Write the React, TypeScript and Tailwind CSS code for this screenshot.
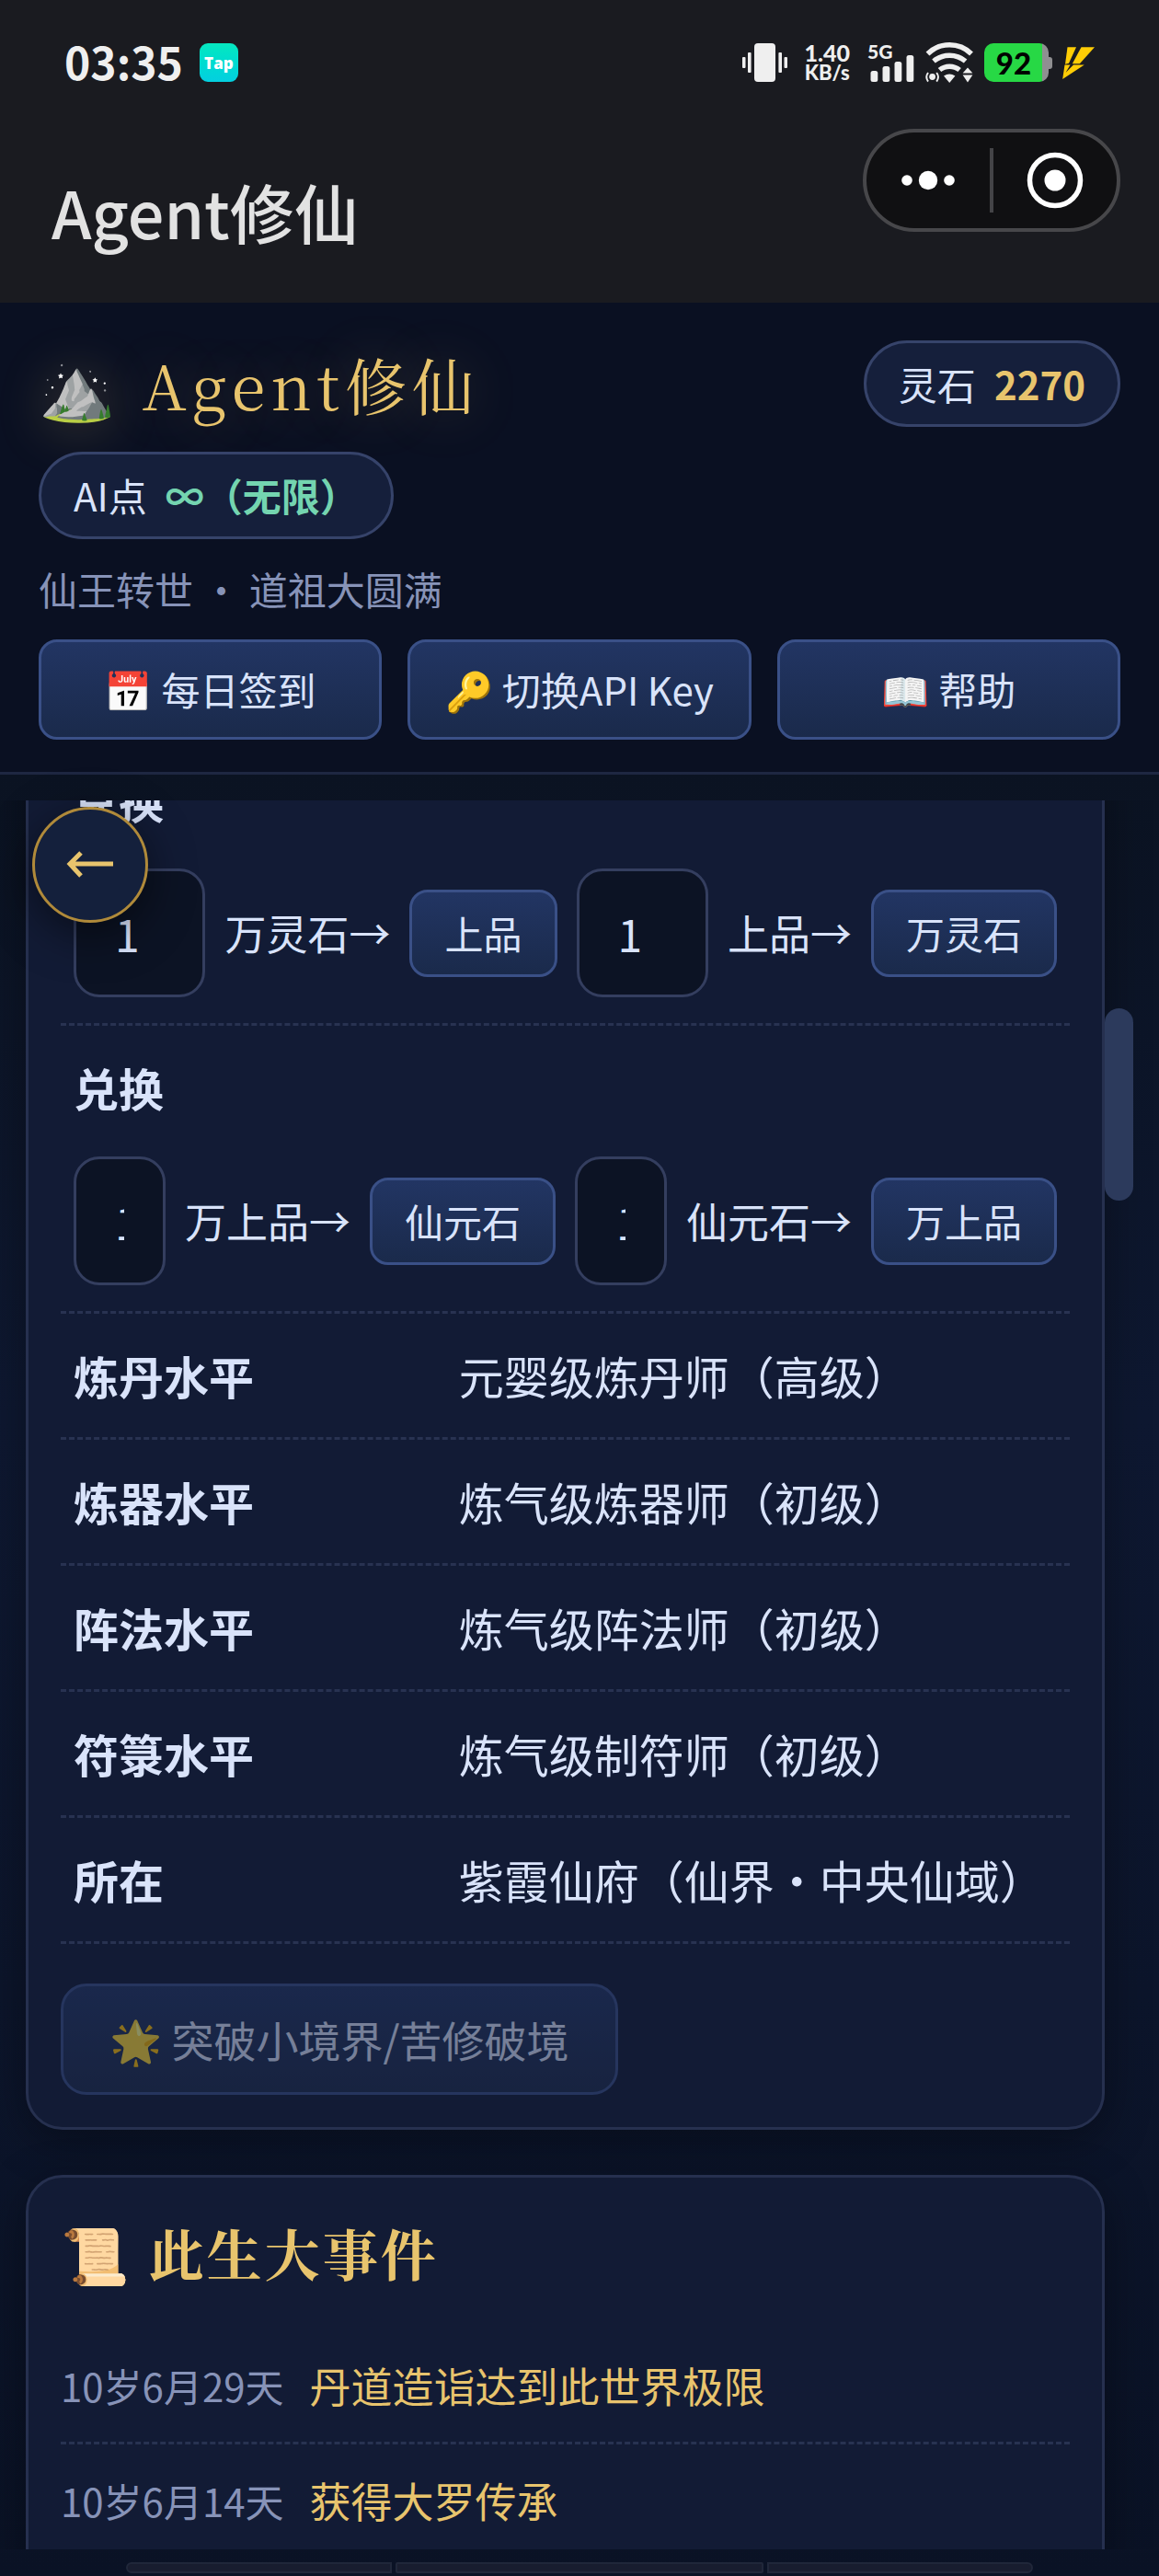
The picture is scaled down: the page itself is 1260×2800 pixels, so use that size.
import { useLayoutEffect, useRef, useState } from 'react';

const sans = "font-['Noto_Sans_CJK_SC','Noto_Color_Emoji',sans-serif]";
const serif = "font-['Noto_Serif_CJK_SC','Noto_Color_Emoji',serif]";

const gameButton =
  'shrink-0 rounded-[20px] border-[3px] border-[#3a5087] bg-linear-to-b from-[#223563] to-[#1a2a4b] pb-0.5 text-[42px] text-[#d9e3fa]';

const actions = ['📅 每日签到', '🔑 切换API Key', '📖 帮助'];

const exchanges = [
  [
    { id: 'ls-sp', from: '万灵石→', to: '上品' },
    { id: 'sp-ls', from: '上品→', to: '万灵石' },
  ],
  [
    { id: 'sp-xy', from: '万上品→', to: '仙元石' },
    { id: 'xy-sp', from: '仙元石→', to: '万上品' },
  ],
];

const stats = [
  { label: '炼丹水平', value: '元婴级炼丹师（高级）' },
  { label: '炼器水平', value: '炼气级炼器师（初级）' },
  { label: '阵法水平', value: '炼气级阵法师（初级）' },
  { label: '符箓水平', value: '炼气级制符师（初级）' },
  { label: '所在', value: '紫霞仙府（仙界・中央仙域）' },
];

const events = [
  { date: '10岁6月29天', title: '丹道造诣达到此世界极限' },
  { date: '10岁6月14天', title: '获得大罗传承' },
];

function StatusBar() {
  return (
    <div className="flex h-[42px] items-center justify-between px-[70px] text-[#efefef]">
      <div className="flex items-center gap-[18px]">
        <span className="pb-1 text-[48px] leading-[38px] font-bold">03:35</span>
        <div className="flex size-[42px] items-center justify-center rounded-[9px] bg-linear-to-b from-[#06e8bf] to-[#04cfe0] font-['Open_Sans'] text-[17px] leading-none font-extrabold text-white">
          Tap
        </div>
      </div>

      <div className="flex items-center gap-[11px]">
        {/* Vibrate */}
        <svg width="49" height="42" viewBox="0 0 49 42" fill="currentColor">
          <rect x="13" width="23" height="42" rx="4" />
          <rect x="0" y="15" width="3.5" height="12" rx="1" />
          <rect x="6" y="10" width="3.6" height="22" rx="1" />
          <rect x="39.4" y="10" width="3.6" height="22" rx="1" />
          <rect x="45.5" y="15" width="3.5" height="12" rx="1" />
        </svg>

        <div className="mx-2 flex flex-col items-center font-['Lato'] font-black">
          <span className="text-[25px] leading-[22px]">1.40</span>
          <span className="text-[22px] leading-[22px]">KB/s</span>
        </div>

        {/* Signal */}
        <div className="relative">
          <svg width="51" height="42" viewBox="0 0 51 42" fill="currentColor">
            <rect x="3.5" y="30" width="7.8" height="12" rx="2.5" />
            <rect x="16.5" y="25" width="7.8" height="17" rx="2.5" />
            <rect x="29.5" y="20" width="7.8" height="22" rx="2.5" />
            <rect x="42.5" y="13" width="7.8" height="29" rx="2.5" />
          </svg>
          <span className="absolute top-0 left-0 font-['Lato'] text-[21px] leading-[18px] font-black">5G</span>
        </div>

        {/* Wi-Fi */}
        <svg width="54" height="44" viewBox="0 0 54 44" fill="none" stroke="currentColor" strokeWidth="5.5">
          <path d="M3.5 12.5A34 34 0 0 1 51 12.5" />
          <path d="M10 20.5A27 27 0 0 1 44.6 20.5" />
          <path d="M16.5 30A17 17 0 0 1 38.1 30" />
          <path d="M21 36.5Q27.2 32.5 33.4 36.5L27.2 44Z" fill="currentColor" stroke="none" />
          <circle cx="8.6" cy="37.5" r="3.4" fill="currentColor" stroke="none" />
          <path d="M4 33Q0.5 37.8 4 42.6M13.2 33Q16.7 37.8 13.2 42.6" strokeWidth="2" />
          <path d="M47 27.5L52.4 33.5H41.6ZM47 43.5L52.4 35.5H41.6Z" fill="currentColor" stroke="none" />
        </svg>

        {/* Battery */}
        <div className="flex items-center">
          <div className="flex h-[42px] w-[70px] items-center justify-center rounded-[10px] bg-linear-to-r from-[#27d845] from-90% to-[#8f8f91] to-90% pr-1.5 font-['Lato'] text-[33px] leading-none font-black text-black">
            92
          </div>
          <div className="h-[13px] w-1 rounded-r-[3px] bg-[#8f8f91]" />
        </div>

        {/* Charging */}
        <svg width="35" height="35" viewBox="0 0 35 35" fill="#ffcd05">
          <path d="M5.5 .3H15L7 17.8L3 18.8Z" />
          <path d="M20.5 .3H35L18.8 18.3H10.8Z" />
          <path d="M2.5 19.5H8.5L3.5 28L12 19.5H23.8L.2 35Z" />
        </svg>
      </div>
    </div>
  );
}

function ExchangeRow({ items }: { items: (typeof exchanges)[number] }) {
  return (
    <tr className="block border-b-[3px] border-dashed border-[#283251] px-[14px] py-7">
      <th scope="row" className="block text-left text-[49px] leading-[78px] font-bold">
        兑换
      </th>
      <td className="mt-9 flex items-center gap-[21px] p-0">
        {items.map((item) => (
          <ExchangeField key={item.id} {...item} />
        ))}
      </td>
    </tr>
  );
}

function ExchangeField({ id, from, to }: { id: string; from: string; to: string }) {
  const [amount, setAmount] = useState('1');

  return (
    <>
      <input
        id={id}
        type="text"
        inputMode="numeric"
        value={amount}
        onChange={(e) => setAmount(e.target.value)}
        className="h-[140px] w-0 min-w-0 flex-1 rounded-[28px] border-[3px] border-[#343e5f] bg-[#0c1324] px-[42px] text-[48px]"
      />
      <label htmlFor={id} className="shrink-0 text-[45px] leading-[78px]">
        {from}
      </label>
      <button className={`${gameButton} h-[95px] px-[35px]`}>{to}</button>
    </>
  );
}

export default function App() {
  const scroller = useRef<HTMLDivElement>(null);

  useLayoutEffect(() => {
    if (scroller.current) scroller.current.scrollTop = 106;
  }, []);

  return (
    <div
      className={`${sans} flex h-screen flex-col overflow-hidden bg-linear-to-b from-[#0b1322] from-30% via-[#0e1831] via-55% to-[#0a1225] text-[#d9e3fa]`}
      lang="zh-CN"
    >
      {/* Phone chrome */}
      <header className="shrink-0 bg-[#1a1b20] pt-[47px] pb-[45px]">
        <StatusBar />
        <div className="mt-[51px] flex items-start justify-between pr-[42px] pl-14">
          <h1 className="mt-9 text-[70px] leading-[108px] font-medium text-[#e2e2e2]">Agent修仙</h1>
          <div className="flex h-[112px] w-[280px] items-center rounded-full border-4 border-[#47474a] bg-[#101012]">
            <button aria-label="更多" className="flex flex-1 justify-center">
              <svg width="60" height="24" viewBox="0 0 60 24" fill="#fff">
                <circle cx="7" cy="12" r="5.8" />
                <circle cx="30" cy="12" r="10.2" />
                <circle cx="53" cy="12" r="5.8" />
              </svg>
            </button>
            <span className="h-[70px] w-1 bg-[#444447]" />
            <button aria-label="关闭" className="flex flex-1 justify-center">
              <svg width="62" height="62" viewBox="0 0 62 62">
                <circle cx="31" cy="31" r="27.5" fill="none" stroke="#fff" strokeWidth="5.5" />
                <circle cx="31" cy="31" r="11.5" fill="#fff" />
              </svg>
            </button>
          </div>
        </div>
      </header>

      {/* Game header */}
      <section className="flex shrink-0 flex-col gap-[27px] border-b-[3px] border-[#1e2742] bg-[#0a1022] px-[42px] pt-[41px] pb-[35px]">
        <div className="flex items-center justify-between">
          <h2
            className={`${serif} text-[67px] leading-[94px] tracking-[6px] text-[#e8c46d] [text-shadow:0_0_60px_rgba(232,196,109,0.3)]`}
          >
            ⛰️ Agent修仙
          </h2>
          <div className="flex h-[94px] items-center gap-5 rounded-full border-[3px] border-[#36436a] bg-[#151f3b] px-[35px] text-[42px] leading-none">
            灵石 <b className="text-[#e8c46d]">2270</b>
          </div>
        </div>
        <div className="flex h-[95px] items-center gap-5 self-start rounded-full border-[3px] border-[#36436a] bg-[#151f3b] px-[35px] pb-0.5 text-[42px] leading-none">
          AI点 <b className="text-[#74d4b0]">∞（无限）</b>
        </div>
        <p className="pb-0.5 text-[42px] leading-[53px] text-[#8793b8]">仙王转世 · 道祖大圆满</p>
        <div className="grid grid-cols-3 gap-7">
          {actions.map((action) => (
            <button key={action} className={`${gameButton} h-[109px]`}>
              {action}
            </button>
          ))}
        </div>
      </section>

      <main className="relative mt-7 min-h-0 flex-1">
        <div
          ref={scroller}
          className="flex h-full flex-col gap-[49px] overflow-y-auto pr-[59px] pb-16 pl-7 [scrollbar-width:none]"
        >
          <section className="shrink-0 rounded-[40px] border-[3px] border-[#26304f] bg-[#121b35] p-[35px] shadow-[0_12px_48px_rgba(0,0,0,0.35)]">
            <table className="block w-full">
              <tbody className="block">
                {exchanges.map((items) => (
                  <ExchangeRow key={items[0].id} items={items} />
                ))}
                {stats.map((stat) => (
                  <tr
                    key={stat.label}
                    className="flex border-b-[3px] border-dashed border-[#283251] py-7 text-[49px] leading-[78px]"
                  >
                    <th scope="row" className="w-[38%] px-[14px] py-0 text-left font-bold">
                      {stat.label}
                    </th>
                    <td className="px-4 py-0">{stat.value}</td>
                  </tr>
                ))}
              </tbody>
            </table>
            <button
              disabled
              className="mt-[43px] block h-[121px] rounded-[28px] border-[3px] border-[#3a5087] bg-linear-to-b from-[#223563] to-[#1d2b4b] px-[50px] text-[46px] opacity-50"
            >
              🌟 突破小境界/苦修破境
            </button>
          </section>

          <section className="shrink-0 rounded-[40px] border-[3px] border-[#26304f] bg-[#121b35] p-[35px] shadow-[0_12px_48px_rgba(0,0,0,0.35)]">
            <h3 className={`${serif} text-[60px] leading-[92px] font-bold tracking-[3px] text-[#e8c46d]`}>
              📜 此生大事件
            </h3>
            <ul className="mt-[38px]">
              {events.map((event) => (
                <li
                  key={event.date}
                  className="flex items-center gap-7 border-b-[3px] border-dashed border-[#283251] py-6 leading-[74px]"
                >
                  <time className="text-[42px] text-[#8793b8]">{event.date}</time>
                  <span className="text-[45px] text-[#e8c46d]">{event.title}</span>
                </li>
              ))}
            </ul>
          </section>
        </div>

        {/* Scrollbar thumb */}
        <div className="absolute top-[226px] right-7 h-[209px] w-[31px] rounded-full bg-[#2c3a5c]" />

        <button
          aria-label="返回"
          className="absolute top-[7px] left-[35px] flex size-[126px] items-center justify-center rounded-full border-[3px] border-[#b08a3a] bg-[#14203c] shadow-[0_12px_48px_rgba(0,0,0,0.5)]"
        >
          <svg width="52" height="30" viewBox="0 0 52 30" fill="none" stroke="#e8c46d" strokeWidth="5">
            <path d="M51 14H4M16 2L4 14L16 27" />
          </svg>
        </button>
      </main>

      {/* Top edge of the tab bar */}
      <nav className="mx-[137px] mt-[14px] mb-[3px] flex h-3 shrink-0 gap-1">
        <span className="w-[289px] rounded-l-md border-2 border-[#20273a] bg-[#181d2f]" />
        <span className="flex-1 rounded-xs border-2 border-[#20273a] bg-[#181d2f]" />
        <span className="w-[289px] rounded-r-md border-2 border-[#20273a] bg-[#181d2f]" />
      </nav>
    </div>
  );
}
